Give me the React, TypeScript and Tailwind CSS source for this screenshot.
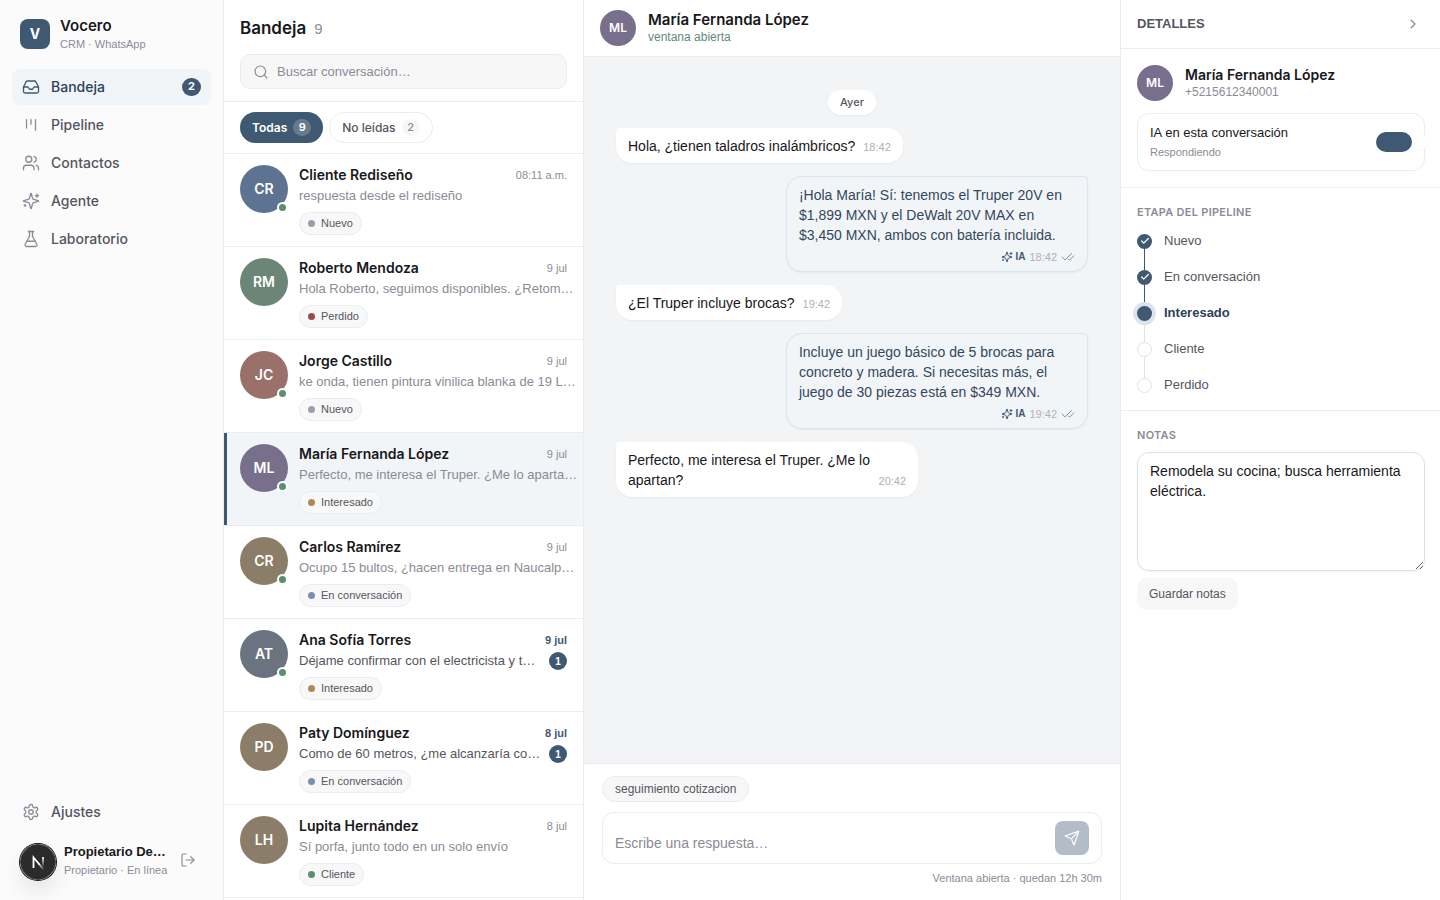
import React, { useState } from 'react';
import { Check, CheckCheck, ChevronRight, FlaskConical, Inbox, LogOut, Search, Users } from 'lucide-react';
import clsx from 'clsx';

type IconProps = { className?: string; strokeWidth?: number };

const KanbanIcon = ({ className, strokeWidth = 1.75 }: IconProps) => (
  <svg className={className} viewBox="0 0 24 24" fill="none" stroke="currentColor" strokeWidth={strokeWidth} strokeLinecap="round" strokeLinejoin="round">
    <path d="M6 5v11" />
    <path d="M12 5v6" />
    <path d="M18 5v14" />
  </svg>
);

const SparklesIcon = ({ className, strokeWidth = 1.75 }: IconProps) => (
  <svg className={className} viewBox="0 0 24 24" fill="none" stroke="currentColor" strokeWidth={strokeWidth} strokeLinecap="round" strokeLinejoin="round">
    <path d="M9.937 15.5A2 2 0 0 0 8.5 14.063l-6.135-1.582a.5.5 0 0 1 0-.962L8.5 9.936A2 2 0 0 0 9.937 8.5l1.582-6.135a.5.5 0 0 1 .963 0L14.063 8.5A2 2 0 0 0 15.5 9.937l6.135 1.581a.5.5 0 0 1 0 .964L15.5 14.063a2 2 0 0 0-1.437 1.437l-1.582 6.135a.5.5 0 0 1-.963 0z" />
    <path d="M20 3v4" />
    <path d="M22 5h-4" />
    <path d="M4 17v2" />
    <path d="M5 18H3" />
  </svg>
);

const SettingsIcon = ({ className, strokeWidth = 1.75 }: IconProps) => (
  <svg className={className} viewBox="0 0 24 24" fill="none" stroke="currentColor" strokeWidth={strokeWidth} strokeLinecap="round" strokeLinejoin="round">
    <path d="M12.22 2h-.44a2 2 0 0 0-2 2v.18a2 2 0 0 1-1 1.73l-.43.25a2 2 0 0 1-2 0l-.15-.08a2 2 0 0 0-2.73.73l-.22.38a2 2 0 0 0 .73 2.73l.15.1a2 2 0 0 1 1 1.72v.51a2 2 0 0 1-1 1.74l-.15.09a2 2 0 0 0-.73 2.73l.22.38a2 2 0 0 0 2.73.73l.15-.08a2 2 0 0 1 2 0l.43.25a2 2 0 0 1 1 1.73V20a2 2 0 0 0 2 2h.44a2 2 0 0 0 2-2v-.18a2 2 0 0 1 1-1.73l.43-.25a2 2 0 0 1 2 0l.15.08a2 2 0 0 0 2.73-.73l.22-.39a2 2 0 0 0-.73-2.73l-.15-.08a2 2 0 0 1-1-1.74v-.5a2 2 0 0 1 1-1.74l.15-.09a2 2 0 0 0 .73-2.73l-.22-.38a2 2 0 0 0-2.73-.73l-.15.08a2 2 0 0 1-2 0l-.43-.25a2 2 0 0 1-1-1.73V4a2 2 0 0 0-2-2z" />
    <circle cx="12" cy="12" r="3" />
  </svg>
);

const SendIcon = ({ className, strokeWidth = 1.75 }: IconProps) => (
  <svg className={className} viewBox="0 0 24 24" fill="none" stroke="currentColor" strokeWidth={strokeWidth} strokeLinecap="round" strokeLinejoin="round">
    <path d="M14.536 21.686a.5.5 0 0 0 .937-.024l6.5-19a.496.496 0 0 0-.635-.635l-19 6.5a.5.5 0 0 0-.024.937l7.93 3.18a2 2 0 0 1 1.112 1.11z" />
    <path d="m21.854 2.147-10.94 10.939" />
  </svg>
);

const navItems = [
  { label: 'Bandeja', icon: Inbox, badge: 2 },
  { label: 'Pipeline', icon: KanbanIcon },
  { label: 'Contactos', icon: Users },
  { label: 'Agente', icon: SparklesIcon },
  { label: 'Laboratorio', icon: FlaskConical },
];

const stageDots: Record<string, string> = {
  Nuevo: 'bg-[#9a9fae]',
  Perdido: 'bg-[#9c4a4a]',
  Interesado: 'bg-[#ad8a5c]',
  'En conversación': 'bg-[#7890b2]',
  Cliente: 'bg-[#5a8f70]',
};

type Conversation = {
  initials: string;
  color: string;
  name: string;
  time: string;
  preview: string;
  stage: string;
  online?: boolean;
  unread?: number;
};

const conversations: Conversation[] = [
  { initials: 'CR', color: 'bg-[#5c7391]', name: 'Cliente Rediseño', time: '08:11 a.m.', preview: 'respuesta desde el rediseño', stage: 'Nuevo', online: true },
  { initials: 'RM', color: 'bg-[#6b8577]', name: 'Roberto Mendoza', time: '9 jul', preview: 'Hola Roberto, seguimos disponibles. ¿Retom…', stage: 'Perdido' },
  { initials: 'JC', color: 'bg-[#99706a]', name: 'Jorge Castillo', time: '9 jul', preview: 'ke onda, tienen pintura vinilica blanka de 19 L…', stage: 'Nuevo', online: true },
  { initials: 'ML', color: 'bg-[#776f8c]', name: 'María Fernanda López', time: '9 jul', preview: 'Perfecto, me interesa el Truper. ¿Me lo aparta…', stage: 'Interesado', online: true },
  { initials: 'CR', color: 'bg-[#8b7d68]', name: 'Carlos Ramírez', time: '9 jul', preview: 'Ocupo 15 bultos, ¿hacen entrega en Naucalp…', stage: 'En conversación', online: true },
  { initials: 'AT', color: 'bg-[#6b7280]', name: 'Ana Sofía Torres', time: '9 jul', preview: 'Déjame confirmar con el electricista y t…', stage: 'Interesado', online: true, unread: 1 },
  { initials: 'PD', color: 'bg-[#8b7d68]', name: 'Paty Domínguez', time: '8 jul', preview: 'Como de 60 metros, ¿me alcanzaría co…', stage: 'En conversación', unread: 1 },
  { initials: 'LH', color: 'bg-[#8b7d68]', name: 'Lupita Hernández', time: '8 jul', preview: 'Sí porfa, junto todo en un solo envío', stage: 'Cliente' },
];

const messages = [
  { from: 'client', text: 'Hola, ¿tienen taladros inalámbricos?', time: '18:42' },
  { from: 'ai', text: '¡Hola María! Sí: tenemos el Truper 20V en $1,899 MXN y el DeWalt 20V MAX en $3,450 MXN, ambos con batería incluida.', time: '18:42' },
  { from: 'client', text: '¿El Truper incluye brocas?', time: '19:42' },
  { from: 'ai', text: 'Incluye un juego básico de 5 brocas para concreto y madera. Si necesitas más, el juego de 30 piezas está en $349 MXN.', time: '19:42' },
  { from: 'client', text: 'Perfecto, me interesa el Truper. ¿Me lo apartan?', time: '20:42' },
];

const stages = ['Nuevo', 'En conversación', 'Interesado', 'Cliente', 'Perdido'];

const Sidebar = () => (
  <aside className="flex w-56 shrink-0 flex-col border-r border-[#ebecef] bg-[#fbfbfc]">
    <div className="flex items-center gap-2.5 px-5 pt-4">
      <div className="flex size-[30px] items-center justify-center rounded-lg bg-[#3f5972] font-['Inter',sans-serif] text-sm font-bold text-white">V</div>
      <div>
        <div className="font-['Inter',sans-serif] text-[15px] leading-5 font-semibold text-[#18181b]">Vocero</div>
        <div className="text-[11px] leading-4 text-[#8b8b95]">CRM · WhatsApp</div>
      </div>
    </div>

    <nav className="mt-[17px] flex flex-col gap-0.5 px-3 font-['Inter',sans-serif]">
      {navItems.map(({ label, icon: Icon, badge }) => (
        <a
          key={label}
          href="#"
          className={clsx(
            'flex h-9 items-center gap-[11px] rounded-lg px-2.5 text-sm font-medium',
            badge ? 'bg-[#f1f5f8] text-[#2c4157]' : 'text-[#55555e]'
          )}
        >
          <Icon className={clsx('size-[18px]', badge ? 'text-[#3f5972]' : 'text-[#8b8b95]')} strokeWidth={1.75} />
          <span className="flex-1">{label}</span>
          {badge && (
            <span className="flex h-[18px] min-w-[19px] items-center justify-center rounded-full bg-[#3f5972] text-[11px] font-bold text-white">
              {badge}
            </span>
          )}
        </a>
      ))}
    </nav>

    <div className="mt-auto px-3 pb-[18px]">
      <a href="#" className="flex h-9 items-center gap-[11px] rounded-lg px-2.5 font-['Inter',sans-serif] text-sm font-medium text-[#55555e]">
        <SettingsIcon className="size-[18px] text-[#8b8b95]" />
        Ajustes
      </a>
      <div className="mt-2 flex h-11 items-center pl-2">
        <svg className="mt-1 size-9 shrink-0 rounded-full shadow-[0_12px_24px_-4px_rgba(0,0,0,0.14),0_0_0_1px_#171717]" viewBox="0 0 36 36" fill="none" aria-hidden="true">
          <defs>
            <linearGradient id="badge-diagonal" x1="19" y1="19" x2="24" y2="25" gradientUnits="userSpaceOnUse">
              <stop stopColor="#fff" />
              <stop offset="1" stopColor="#fff" stopOpacity="0.1" />
            </linearGradient>
            <linearGradient id="badge-stem" x1="23" y1="13" x2="23" y2="23" gradientUnits="userSpaceOnUse">
              <stop stopColor="#fff" />
              <stop offset="1" stopColor="#fff" stopOpacity="0" />
            </linearGradient>
          </defs>
          <circle cx="18" cy="18" r="17.5" fill="#2b2b2b" stroke="#4a4a4a" />
          <path d="M13.5 24V13.5L19.5 20.5" stroke="#fff" strokeWidth="1.8" />
          <path d="M19 20L23.5 25.3" stroke="url(#badge-diagonal)" strokeWidth="1.8" />
          <path d="M23 13V23" stroke="url(#badge-stem)" strokeWidth="1.8" />
        </svg>
        <div className="ml-2 w-[104px]">
          <div className="truncate text-[13px] leading-5 font-semibold text-[#18181b]">Propietario De…</div>
          <div className="text-[11px] leading-4 whitespace-nowrap text-[#8b8b95]">Propietario · En línea</div>
        </div>
        <button type="button" aria-label="Cerrar sesión" className="ml-2 flex size-6 items-center justify-center text-[#8b8b95]">
          <LogOut className="size-4" strokeWidth={1.75} />
        </button>
      </div>
    </div>
  </aside>
);

const ConversationRow = ({ item, selected, onSelect }: { item: Conversation; selected: boolean; onSelect: () => void }) => (
  <button
    type="button"
    onClick={onSelect}
    className={clsx(
      'flex w-full shrink-0 gap-[11px] border-b border-[#ebecef] px-4 py-[11px] text-left',
      selected && 'bg-[#f1f5f8] shadow-[inset_3px_0_0_#3f5972]'
    )}
  >
    <span
      className={clsx(
        "relative flex size-12 shrink-0 items-center justify-center rounded-full font-['Inter',sans-serif] text-sm font-semibold text-white",
        item.color
      )}
    >
      {item.initials}
      {item.online && <span className="absolute right-0 bottom-0 size-[11px] rounded-full border-2 border-white bg-[#5a8f70]" />}
    </span>
    <span className="block min-w-0 flex-1">
      <span className="flex items-center justify-between">
        <span className="truncate font-['Inter',sans-serif] text-sm leading-5 font-semibold text-[#18181b]">{item.name}</span>
        <span className={clsx('text-[11px]', item.unread ? 'font-semibold text-[#3f5972]' : 'text-[#8b8b95]')}>{item.time}</span>
      </span>
      <span className="mt-px flex items-center">
        <span className={clsx('min-w-0 flex-1 text-[13px] leading-5 whitespace-nowrap', item.unread ? 'text-[#55555e]' : 'text-[#8b8b95]')}>
          {item.preview}
        </span>
        {item.unread && (
          <span className="flex size-[18px] shrink-0 items-center justify-center rounded-full bg-[#3f5972] text-[10px] font-bold text-white">
            {item.unread}
          </span>
        )}
      </span>
      <span className="mt-1.5 flex h-[23px] w-fit items-center gap-1.5 rounded-full border border-[#ebecef] bg-[#f8f8f9] px-2 text-[11px] text-[#55555e]">
        <span className={clsx('size-[7px] rounded-full', stageDots[item.stage])} />
        {item.stage}
      </span>
    </span>
  </button>
);

const ConversationList = () => {
  const [selected, setSelected] = useState(3);

  return (
    <section className="flex w-[360px] shrink-0 flex-col border-r border-[#ebecef] bg-white">
      <div className="border-b border-[#ebecef] px-4 pt-4 pb-3">
        <div className="flex h-6 items-baseline gap-2">
          <h1 className="font-['Inter',sans-serif] text-[17px] leading-6 font-semibold text-[#18181b]">Bandeja</h1>
          <span className="text-[15px] leading-5 text-[#8b8b95]">9</span>
        </div>
        <label className="mt-3.5 flex h-[35px] items-center gap-2 rounded-[10px] border border-[#ebecef] bg-[#f7f7f8] px-3">
          <Search className="size-4 shrink-0 text-[#8b8b95]" strokeWidth={1.75} />
          <input
            type="search"
            aria-label="Buscar conversación"
            placeholder="Buscar conversación…"
            className="min-w-0 flex-1 bg-transparent text-[13px] outline-none placeholder:text-[#8b8b95]"
          />
        </label>
      </div>

      <div className="flex gap-1.5 border-b border-[#ebecef] px-4 py-2.5">
        <button type="button" className="flex h-[31px] items-center gap-1.5 rounded-full bg-[#3f5972] px-3 font-['Inter',sans-serif] text-xs font-semibold text-white">
          Todas
          <span className="flex h-[17px] w-[18px] items-center justify-center rounded-full bg-white/20 text-[11px]">9</span>
        </button>
        <button type="button" className="flex h-[31px] items-center gap-1.5 rounded-full border border-[#ebecef] px-3 font-['Inter',sans-serif] text-xs font-medium text-[#55555e]">
          No leídas
          <span className="flex h-[17px] w-[18px] items-center justify-center rounded-full bg-[#f7f7f8] text-[11px] text-[#8b8b95]">2</span>
        </button>
      </div>

      <div className="flex min-h-0 flex-1 flex-col overflow-hidden">
        {conversations.map((item, index) => (
          <ConversationRow key={item.name} item={item} selected={index === selected} onSelect={() => setSelected(index)} />
        ))}
      </div>
    </section>
  );
};

const Chat = () => (
  <main className="flex min-w-0 flex-1 flex-col bg-white">
    <header className="flex h-[57px] items-center gap-3 border-b border-[#ebecef] px-4">
      <div className="flex size-9 items-center justify-center rounded-full bg-[#776f8c] font-['Inter',sans-serif] text-xs font-semibold text-white">ML</div>
      <div>
        <h2 className="font-['Inter',sans-serif] text-[15px] leading-[18px] font-semibold text-[#18181b]">María Fernanda López</h2>
        <p className="text-xs leading-4 text-[#5f8a76]">ventana abierta</p>
      </div>
    </header>

    <div className="flex min-h-0 flex-1 flex-col gap-[13px] overflow-hidden bg-[#f3f4f6] px-8 pt-[33px]">
      <div className="flex h-[25px] items-center self-center rounded-full bg-white px-3 font-['Inter',sans-serif] text-[11px] font-medium text-[#55555e] shadow-xs">
        Ayer
      </div>
      {messages.map((message) =>
        message.from === 'client' ? (
          <div
            key={message.text}
            className="max-w-[64%] self-start rounded-2xl rounded-tl-sm bg-white px-3 pt-2 pb-[7px] text-sm leading-5 text-[#18181b] shadow-xs"
          >
            {message.text}
            <span className="float-right mt-0.5 ml-2 text-[11px] leading-[18px] text-[#b0b0b8]">{message.time}</span>
          </div>
        ) : (
          <div
            key={message.text}
            className="max-w-[64%] self-end rounded-2xl rounded-tr-sm border border-[#dce5ee] bg-[#f1f5f8] px-3 pt-2 pb-1.5 text-sm leading-5 text-[#34475a] shadow-xs"
          >
            {message.text}
            <div className="mt-1 flex h-4 items-center justify-end gap-1 text-[11px] text-[#b0b0b8]">
              <span className="flex items-center gap-0.5 text-[10px] font-semibold text-[#3f5972]">
                <SparklesIcon className="size-3" strokeWidth={2} />
                IA
              </span>
              {message.time}
              <CheckCheck className="size-3.5 text-[#6b8299]" strokeWidth={1.5} />
            </div>
          </div>
        )
      )}
    </div>

    <footer className="border-t border-[#ebecef] px-[18px] pt-3 pb-3.5">
      <button type="button" className="flex h-[26px] items-center rounded-full border border-[#ebecef] bg-[#f7f7f8] px-3 text-xs font-medium text-[#55555e]">
        seguimiento cotizacion
      </button>
      <div className="mt-2.5 flex h-[52px] items-center rounded-xl border border-[#ebecef] px-3">
        <textarea
          rows={1}
          aria-label="Respuesta"
          placeholder="Escribe una respuesta…"
          className="h-[30px] min-w-0 flex-1 resize-none self-end text-sm leading-5 outline-none placeholder:text-[#8b8b95]"
        />
        <button type="button" aria-label="Enviar" className="flex size-[34px] items-center justify-center rounded-lg bg-[#b2bdc7] text-white">
          <SendIcon className="size-4" />
        </button>
      </div>
      <p className="mt-1.5 text-right text-[11px] leading-4 text-[#8b8b95]">Ventana abierta · quedan 12h 30m</p>
    </footer>
  </main>
);

const Details = () => {
  const [aiEnabled, setAiEnabled] = useState(true);
  const current = 2;

  return (
    <aside className="flex w-80 shrink-0 flex-col overflow-hidden border-l border-[#ebecef] bg-white">
      <div className="flex h-[49px] shrink-0 items-center justify-between border-b border-[#ebecef] pr-[15px] pl-4">
        <h2 className="text-[13px] font-semibold text-[#55555e]">DETALLES</h2>
        <button type="button" aria-label="Ocultar detalles" className="flex size-6 items-center justify-center text-[#8b8b95]">
          <ChevronRight className="size-4" strokeWidth={1.75} />
        </button>
      </div>

      <section className="border-b border-[#ebecef] py-4 pr-[15px] pl-4">
        <div className="flex items-center gap-3">
          <div className="flex size-9 items-center justify-center rounded-full bg-[#776f8c] font-['Inter',sans-serif] text-xs font-semibold text-white">ML</div>
          <div>
            <div className="font-['Inter',sans-serif] text-sm leading-[18px] font-semibold text-[#18181b]">María Fernanda López</div>
            <div className="text-xs leading-4 text-[#8b8b95]">+5215612340001</div>
          </div>
        </div>
        <div className="mt-3 flex h-[58px] items-center justify-between rounded-xl border border-[#ebecef] px-3">
          <label htmlFor="ai-toggle">
            <span className="block text-[13px] leading-5 font-medium text-[#18181b]">IA en esta conversación</span>
            <span className="block text-[11px] leading-[18px] text-[#8b8b95]">Respondiendo</span>
          </label>
          <input
            id="ai-toggle"
            type="checkbox"
            role="switch"
            checked={aiEnabled}
            onChange={(e) => setAiEnabled(e.target.checked)}
            className="relative h-5 w-9 appearance-none rounded-full bg-[#d4d4d8] after:absolute after:top-0.5 after:left-0.5 after:size-4 after:rounded-full after:bg-white after:shadow-xs checked:bg-[#3f5972] checked:after:left-9"
          />
        </div>
      </section>

      <section className="border-b border-[#ebecef] px-4 pt-4 pb-[7px]">
        <h3 className="font-['Inter',sans-serif] text-[11px] leading-4 font-semibold tracking-wide text-[#8b8b95]">ETAPA DEL PIPELINE</h3>
        <ol className="mt-[3px]">
          {stages.map((stage, index) => (
            <li key={stage}>
              <button type="button" className="flex h-9 items-center gap-3 text-left">
                <span className="flex h-9 w-[15px] flex-col items-center">
                  <span className={clsx('w-px flex-1', index === 0 ? 'bg-transparent' : index <= current ? 'bg-[#3f5972]' : 'bg-[#e1e2e6]')} />
                  <span
                    className={clsx(
                      'flex size-[15px] shrink-0 items-center justify-center rounded-full',
                      index <= current ? 'bg-[#3f5972] text-white' : 'border border-[#e1e2e6] bg-white',
                      index === current && 'ring-4 ring-[#dce5ee]'
                    )}
                  >
                    {index < current && <Check className="size-2.5" strokeWidth={3} />}
                  </span>
                  <span className={clsx('w-px flex-1', index === stages.length - 1 ? 'bg-transparent' : index < current ? 'bg-[#3f5972]' : 'bg-[#e1e2e6]')} />
                </span>
                <span className={clsx('text-[13px]', index === current ? 'font-semibold text-[#2c4157]' : 'text-[#55555e]')}>{stage}</span>
              </button>
            </li>
          ))}
        </ol>
      </section>

      <section className="pt-4 pr-[15px] pl-4">
        <label htmlFor="notes" className="block font-['Inter',sans-serif] text-[11px] leading-4 font-semibold tracking-wide text-[#8b8b95]">
          NOTAS
        </label>
        <textarea
          id="notes"
          defaultValue="Remodela su cocina; busca herramienta eléctrica."
          className="mt-[9px] block h-[119px] w-full rounded-xl border border-[#dfe0e4] px-3 py-2 text-sm leading-5 text-[#18181b] shadow-xs outline-none"
        />
        <button type="button" className="mt-[7px] h-8 rounded-[10px] bg-[#f7f7f8] px-3 text-xs font-medium text-[#55555e]">
          Guardar notas
        </button>
      </section>
    </aside>
  );
};

export default function App() {
  return (
    <div className="flex h-screen overflow-hidden bg-white font-['Liberation_Sans',Arial,sans-serif]">
      <Sidebar />
      <ConversationList />
      <Chat />
      <Details />
    </div>
  );
}
